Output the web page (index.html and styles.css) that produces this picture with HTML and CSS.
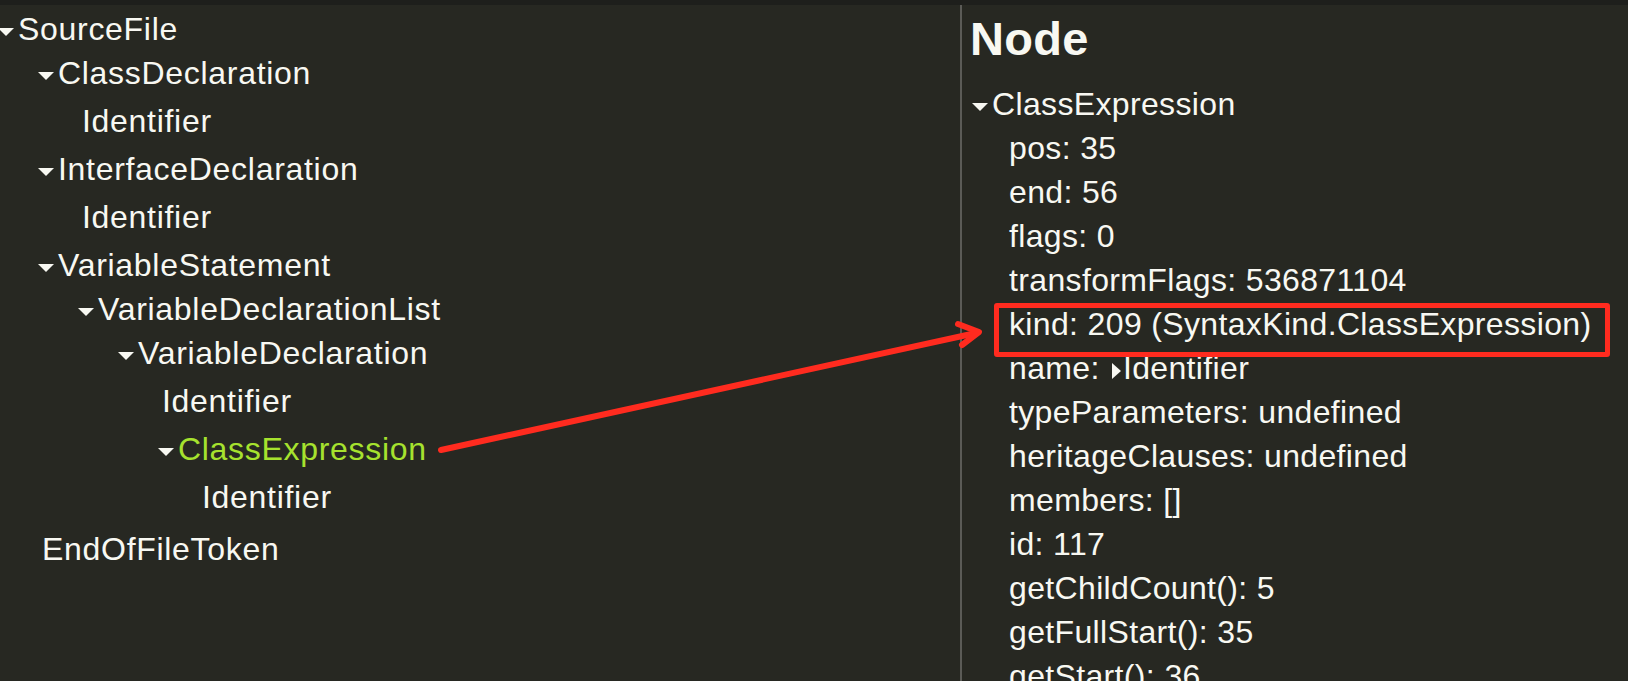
FILE: index.html
```html
<!DOCTYPE html>
<html lang="en">
<head>
<meta charset="utf-8">
<title>TS AST Viewer</title>
<link rel="stylesheet" href="styles.css">
</head>
<body>
<div class="app">
  <div class="topbar"></div>
  <div class="main">
    <section class="tree-pane">
      <div class="tree">
        <div class="node">
          <div class="row"><span class="caret"></span><span class="label">SourceFile</span></div>
          <div class="children">
            <div class="node">
              <div class="row"><span class="caret"></span><span class="label">ClassDeclaration</span></div>
              <div class="children">
                <div class="leaf">Identifier</div>
              </div>
            </div>
            <div class="node">
              <div class="row"><span class="caret"></span><span class="label">InterfaceDeclaration</span></div>
              <div class="children">
                <div class="leaf">Identifier</div>
              </div>
            </div>
            <div class="node">
              <div class="row"><span class="caret"></span><span class="label">VariableStatement</span></div>
              <div class="children">
                <div class="node">
                  <div class="row"><span class="caret"></span><span class="label">VariableDeclarationList</span></div>
                  <div class="children">
                    <div class="node">
                      <div class="row"><span class="caret"></span><span class="label">VariableDeclaration</span></div>
                      <div class="children">
                        <div class="leaf">Identifier</div>
                        <div class="node">
                          <div class="row selected"><span class="caret"></span><span class="label">ClassExpression</span></div>
                          <div class="children">
                            <div class="leaf">Identifier</div>
                          </div>
                        </div>
                      </div>
                    </div>
                  </div>
                </div>
              </div>
            </div>
            <div class="leaf">EndOfFileToken</div>
          </div>
        </div>
      </div>
    </section>
    <section class="props-pane">
      <h1 class="pane-title">Node</h1>
      <div class="prop-tree">
        <div class="row"><span class="caret"></span><span class="label">ClassExpression</span></div>
        <div class="props">
          <div class="prop"><span class="key">pos:</span> <span class="val">35</span></div>
          <div class="prop"><span class="key">end:</span> <span class="val">56</span></div>
          <div class="prop"><span class="key">flags:</span> <span class="val">0</span></div>
          <div class="prop"><span class="key">transformFlags:</span> <span class="val">536871104</span></div>
          <div class="prop"><span class="key">kind:</span> <span class="val">209 (SyntaxKind.ClassExpression)</span></div>
          <div class="prop"><span class="key">name:</span> <span class="caret-right"></span><span class="val">Identifier</span></div>
          <div class="prop"><span class="key">typeParameters:</span> <span class="val">undefined</span></div>
          <div class="prop"><span class="key">heritageClauses:</span> <span class="val">undefined</span></div>
          <div class="prop"><span class="key">members:</span> <span class="val">[]</span></div>
          <div class="prop"><span class="key">id:</span> <span class="val">117</span></div>
          <div class="prop"><span class="key">getChildCount():</span> <span class="val">5</span></div>
          <div class="prop"><span class="key">getFullStart():</span> <span class="val">35</span></div>
          <div class="prop"><span class="key">getStart():</span> <span class="val">36</span></div>
        </div>
      </div>
    </section>
  </div>
  <div class="annot-box"></div>
  <svg class="annot-arrow" width="1628" height="681" viewBox="0 0 1628 681" aria-hidden="true">
    <line x1="441" y1="450" x2="976" y2="333" />
    <polyline points="958,324 979,332 962,345" />
  </svg>
</div>
</body>
</html>
```

FILE: styles.css
```css
* { box-sizing: border-box; }

html, body {
  margin: 0;
  padding: 0;
  height: 100%;
  overflow: hidden;
  background: #272822;
}

.app {
  position: relative;
  width: 1628px;
  height: 681px;
  display: flex;
  flex-direction: column;
  font-family: "Liberation Sans", Arial, sans-serif;
  font-size: 32px;
  color: #f8f8f2;
  overflow: hidden;
}

.topbar {
  height: 5px;
  flex: none;
  background: #1e1f1c;
}

.main {
  flex: 1;
  display: flex;
  min-height: 0;
}

.tree-pane {
  width: 960px;
  flex: none;
  padding-top: 2px;
  overflow: hidden;
  letter-spacing: 0.7px;
}

.tree {
  margin-left: -2px;
}

.row {
  display: flex;
  align-items: baseline;
  height: 44px;
  line-height: 44px;
  white-space: nowrap;
}

.caret {
  display: inline-block;
  flex: none;
  width: 0;
  height: 0;
  border-left: 8px solid transparent;
  border-right: 8px solid transparent;
  border-top: 8px solid #f8f8f2;
  margin-right: 4px;
  align-self: flex-start;
  margin-top: 21px;
}

.children {
  padding-left: 40px;
}

.leaf {
  line-height: 44px;
  padding: 4px 0 4px 4px;
  white-space: nowrap;
}

.row.selected .label {
  color: #a6e22e;
}

.props-pane {
  flex: 1;
  min-width: 0;
  border-left: 2px solid #5b5b57;
  padding: 6px 0 0 8px;
  overflow: hidden;
  letter-spacing: 0.35px;
}

.pane-title {
  margin: 0;
  font-size: 47px;
  font-weight: 700;
  line-height: 56px;
  letter-spacing: 0.3px;
}

.prop-tree {
  margin: 15px 0 0 2px;
}

.props {
  padding-left: 37px;
}

.prop {
  height: 44px;
  line-height: 44px;
  white-space: nowrap;
}

.caret-right {
  display: inline-block;
  width: 0;
  height: 0;
  border-top: 8px solid transparent;
  border-bottom: 8px solid transparent;
  border-left: 9px solid #f8f8f2;
  margin: 0 2px 0 3px;
  vertical-align: 0;
}

.annot-box {
  position: absolute;
  left: 994px;
  top: 303px;
  width: 616px;
  height: 54px;
  border: 5px solid #ff2b1f;
  border-radius: 3px;
  pointer-events: none;
}

.annot-arrow {
  position: absolute;
  left: 0;
  top: 0;
  pointer-events: none;
  fill: none;
  stroke: #ff2b1f;
  stroke-width: 6;
  stroke-linecap: round;
  stroke-linejoin: round;
}
```
